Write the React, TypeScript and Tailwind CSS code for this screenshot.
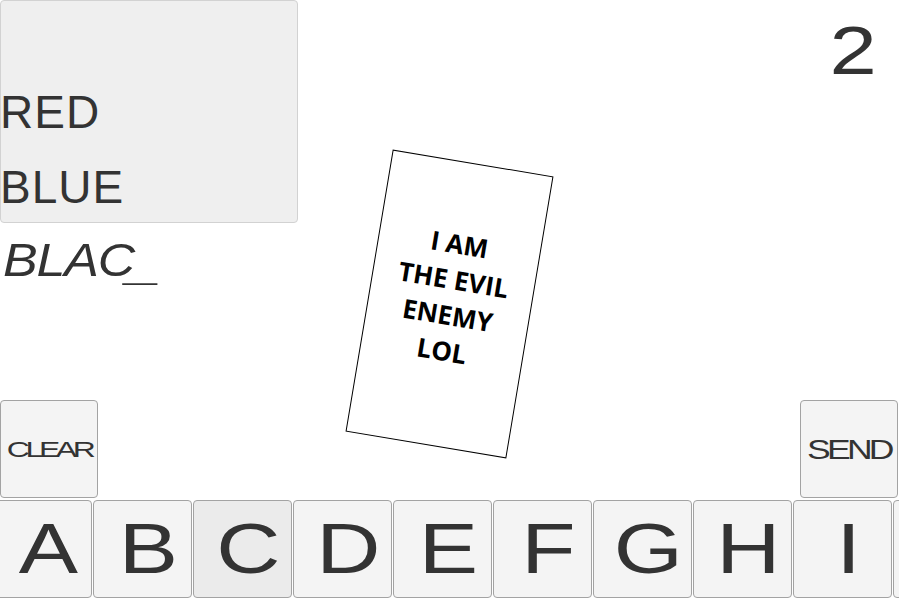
import React from 'react';

const LETTERS = ['A', 'B', 'C', 'D', 'E', 'F', 'G', 'H', 'I', 'J'];
const PRESSED = 'C';

const sans = { fontFamily: '"Liberation Sans", Arial, sans-serif' };

const LetterKey: React.FC<{ letter: string }> = ({ letter }) => (
  <button
    className={`flex h-[98px] w-[99px] shrink-0 items-center justify-center rounded-[4px] border border-[#a3a3a3] pl-3 text-[70px] leading-none text-[#333] ${
      letter === PRESSED ? 'bg-[#ebebeb]' : 'bg-[#f4f4f4]'
    }`}
  >
    <span className="inline-block scale-x-[1.27]">{letter}</span>
  </button>
);

const ActionKey: React.FC<{ label: string; size: string; stretch: string }> = ({ label, size, stretch }) => (
  <button className="flex h-[98px] w-[98px] items-center justify-center rounded-[4px] border border-[#a3a3a3] bg-[#f4f4f4] pt-[2px] text-[#333]">
    <span className={`inline-block leading-none ${size} ${stretch}`}>{label}</span>
  </button>
);

export default function App() {
  return (
    <div className="relative flex h-[601px] w-[899px] flex-col overflow-hidden bg-white" style={sans}>
      {/* words found so far + score */}
      <div className="flex justify-between">
        <div className="flex h-[223px] w-[298px] flex-col rounded-[4px] border border-[#d2d2d2] bg-[#efefef] pt-[74px] text-[46px] leading-[75px] tracking-[1px] text-[#333]">
          <div className="-ml-[1px]">RED</div>
          <div className="-ml-[1px]">BLUE</div>
        </div>
        <div className="mr-[22px] mt-[16px] origin-right scale-x-[1.25] text-[68px] leading-none text-[#333]">2</div>
      </div>

      {/* current guess */}
      <div className="mt-[12px] flex items-baseline pl-[3px] text-[46px] italic leading-[50px] tracking-[-1px] text-[#333]">
        <span className="inline-block origin-left scale-x-[1.13]">BLAC</span>
        <span className="ml-[8px] inline-block origin-left translate-y-[3px] scale-x-[1.33]">_</span>
      </div>

      <div className="flex-1" />

      <div className="flex justify-between pr-[1px]">
        <ActionKey label="CLEAR" size="text-[22px] tracking-[-3px]" stretch="scale-x-[1.45]" />
        <ActionKey label="SEND" size="text-[28px] tracking-[-3px]" stretch="scale-x-[1.27]" />
      </div>

      <div className="-ml-[7px] mb-[3px] mt-[2px] flex gap-px">
        {LETTERS.map((l) => (
          <LetterKey key={l} letter={l} />
        ))}
      </div>

      {/* enemy card */}
      <div className="absolute left-[368px] top-[161px] flex h-[286px] w-[163px] rotate-[9.5deg] items-center justify-center border border-black bg-white">
        <div
          className="-mt-[14px] text-center text-[26px] font-bold leading-[36px] text-black"
          style={{ fontFamily: '"Open Sans", sans-serif' }}
        >
          I AM
          <br />
          THE EVIL
          <br />
          ENEMY
          <br />
          LOL
        </div>
      </div>
    </div>
  );
}
